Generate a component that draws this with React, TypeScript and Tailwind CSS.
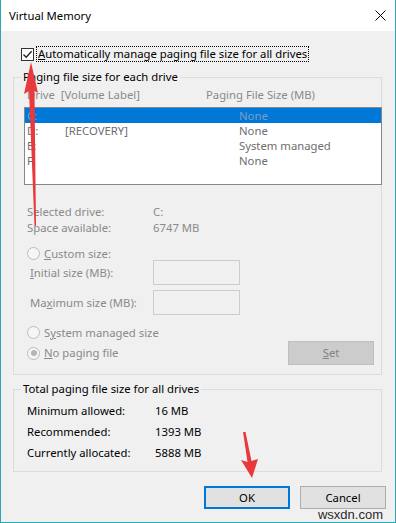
import React from "react";

const dis = "text-[#8a8a8a]";

function Radio({ checked = false }: { checked?: boolean }) {
  return (
    <span className="w-[13px] h-[13px] rounded-full border border-[#bcbcbc] bg-[#f6f6f6] flex items-center justify-center shrink-0">
      {checked && <span className="w-[6px] h-[6px] rounded-full bg-[#b5b5b5]" />}
    </span>
  );
}

export default function App() {
  return (
    <div
      className="relative w-[396px] h-[523px] border-x border-b border-[#2aa6b4] bg-[#f0f0f0] flex flex-col text-[11.3px] leading-[16px] text-black overflow-hidden"
      style={{ fontFamily: '"Noto Sans", "Open Sans", sans-serif' }}
    >
      {/* title bar */}
      <div className="h-[31px] bg-white flex items-center justify-between pl-[8px] pr-[9px] shrink-0">
        <span>Virtual Memory</span>
        <svg width="11" height="11" viewBox="0 0 11 11">
          <path d="M0.5 0.5 L10.5 10.5 M10.5 0.5 L0.5 10.5" stroke="#000" strokeWidth="1" />
        </svg>
      </div>

      <div className="flex flex-col pl-[12px] pr-[13px]">
        {/* checkbox row */}
        <div className="mt-[15px] h-[16px] flex items-center pl-[8px]">
          <span className="w-[13px] h-[13px] border border-[#333] bg-white flex items-center justify-center shrink-0">
            <svg width="11" height="11" viewBox="0 0 11 11">
              <path d="M1.5 5.5 L4.2 8.3 L9.6 2.2" fill="none" stroke="#222" strokeWidth="1.3" />
            </svg>
          </span>
          <span className="ml-[2px] px-[1px] border border-dotted border-black leading-[14px]">
            <u>A</u>utomatically manage paging file size for all drives
          </span>
        </div>

        {/* group 1 */}
        <fieldset className="mt-[7px] border border-[#dcdcdc]">
          <legend className="ml-[7px] px-[2px] leading-[16px]">Paging file size for each drive</legend>
          <div className="pl-[10px] pr-[7px] pb-[9px]">
            <div className={`mt-[2px] h-[16px] flex items-center ${dis}`}>
              <span className="ml-[3px] w-[179px]">Drive&nbsp; [Volume Label]</span>
              <span>Paging File Size (MB)</span>
            </div>
            <div className="mt-[4px] h-[78px] mr-[-8px] border border-[#828790] bg-white text-[#6d6d6d]">
              {[
                ["C:", "", "None", true],
                ["D:", "[RECOVERY]", "None", false],
                ["E:", "", "System managed", false],
                ["F:", "", "None", false],
              ].map(([d, l, s, sel], i) => (
                <div
                  key={i}
                  className={`h-[15px] flex items-center ${sel ? "bg-[#0078d7] text-[#7d9cc6]" : ""}`}
                >
                  <span className="pl-[2px] w-[40px]">{d as string}</span>
                  <span className="w-[174px]">{l as string}</span>
                  <span>{s as string}</span>
                </div>
              ))}
            </div>

            <div className={`mt-[19px] h-[16px] flex items-center ${dis}`}>
              <span className="ml-[3px] w-[126px]">Selected drive:</span>
              <span>C:</span>
            </div>
            <div className={`h-[16px] flex items-center ${dis}`}>
              <span className="ml-[3px] w-[126px]">Space available:</span>
              <span>6747 MB</span>
            </div>

            <div className={`mt-[11px] h-[13px] flex items-center ${dis}`}>
              <span className="ml-[3px]"><Radio /></span>
              <span className="ml-[4px]"><u>C</u>ustom size:</span>
            </div>
            <div className={`h-[25px] flex items-center ${dis}`}>
              <span className="ml-[6px] w-[123px]"><u>I</u>nitial size (MB):</span>
              <span className="w-[87px] h-[25px] border border-[#cccccc] bg-[#f0f0f0]" />
            </div>
            <div className={`mt-[5px] h-[25px] flex items-center ${dis}`}>
              <span className="ml-[6px] w-[123px]">Ma<u>x</u>imum size (MB):</span>
              <span className="w-[87px] h-[25px] border border-[#cccccc] bg-[#f0f0f0]" />
            </div>

            <div className={`mt-[11px] h-[13px] flex items-center ${dis}`}>
              <span className="ml-[3px]"><Radio /></span>
              <span className="ml-[4px]">S<u>y</u>stem managed size</span>
            </div>
            <div className={`mt-[2px] h-[24px] flex items-center justify-between ${dis}`}>
              <div className="flex items-center">
                <span className="ml-[3px]"><Radio checked /></span>
                <span className="ml-[4px]"><u>N</u>o paging file</span>
              </div>
              <span className="w-[86px] h-[24px] bg-[#cccccc] border border-[#bfbfbf] flex items-center justify-center text-[#838383]">
                <span><u>S</u>et</span>
              </span>
            </div>
          </div>
        </fieldset>

        {/* group 2 */}
        <fieldset className="mt-[6px] border border-[#dcdcdc]">
          <legend className="ml-[7px] px-[2px] leading-[16px]">Total paging file size for all drives</legend>
          <div className="pt-[3px] pl-[13px] pb-[8px]">
            {[
              ["Minimum allowed:", "16 MB"],
              ["Recommended:", "1393 MB"],
              ["Currently allocated:", "5888 MB"],
            ].map(([a, b]) => (
              <div key={a} className="h-[21px] flex items-center">
                <span className="w-[128px]">{a}</span>
                <span>{b}</span>
              </div>
            ))}
          </div>
        </fieldset>

        {/* buttons */}
        <div className="mt-[14px] flex justify-end gap-[10px] mr-[-4px]">
          <button className="w-[86px] h-[23px] bg-[#e1e1e1] border-2 border-[#0078d7] flex items-center justify-center">
            OK
          </button>
          <button className="w-[86px] h-[23px] bg-[#e1e1e1] border border-[#adadad] flex items-center justify-center">
            Cancel
          </button>
        </div>
      </div>

      {/* watermark */}
      <span
        className="absolute right-[12px] bottom-[1px] text-[13px] leading-[13px] text-[#2a2a2a]"
        style={{ fontFamily: '"Liberation Sans", Arial, sans-serif' }}
      >
        wsxdn.com
      </span>

      {/* red annotation arrows */}
      <svg className="absolute left-0 top-0 pointer-events-none" width="396" height="523" viewBox="0 0 396 523">
        <polygon
          points="30,62 37,93 33.5,91 35,226 33.5,226 28,91 23,94"
          fill="#e8393d"
        />
        <polygon
          points="251,478 257,459 250.5,461 244.5,432 242,432 246.5,462 240,460"
          fill="#e8393d"
        />
      </svg>
    </div>
  );
}
